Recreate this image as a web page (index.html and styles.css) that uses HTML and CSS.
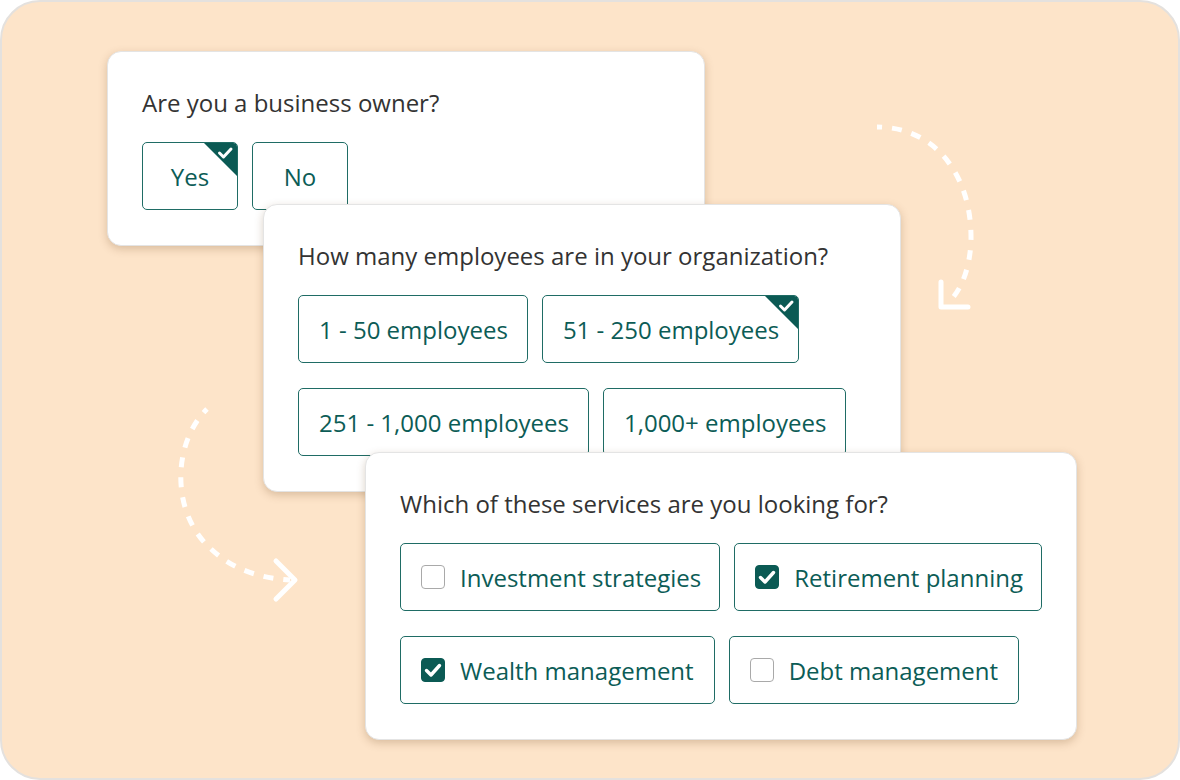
FILE: index.html
```html
<!DOCTYPE html>
<html lang="en">
<head>
<meta charset="utf-8">
<title>Questionnaire</title>
<link rel="stylesheet" href="styles.css">
</head>
<body>
<div class="canvas">
  <svg class="arrows" width="1180" height="780" viewBox="0 0 1180 780" aria-hidden="true">
    <path class="dash" d="M877,127 C935,127 972,175 971,240 C970,268 962,288 950,301"/>
    <path class="head" d="M941,282 L941,307 L968,307"/>
    <path class="dash" d="M207,409 C175,440 170,505 205,543 C230,570 260,578 290,580"/>
    <path class="head" d="M276,561 L295,580 L276,599"/>
  </svg>

  <section class="card card-owner">
    <p class="question">Are you a business owner?</p>
    <div class="row">
      <div class="choice choice-short selected">Yes
        <svg class="corner" width="33" height="33" viewBox="0 0 33 33"><polygon points="0,0 33,0 33,33"/><path d="M15.5,10 L19.5,14 L27,6"/></svg>
      </div>
      <div class="choice choice-short">No</div>
    </div>
  </section>

  <section class="card card-size">
    <p class="question">How many employees are in your organization?</p>
    <div class="rows">
      <div class="row">
        <div class="choice">1 - 50 employees</div>
        <div class="choice selected">51 - 250 employees
          <svg class="corner" width="33" height="33" viewBox="0 0 33 33"><polygon points="0,0 33,0 33,33"/><path d="M15.5,10 L19.5,14 L27,6"/></svg>
        </div>
      </div>
      <div class="row">
        <div class="choice">251 - 1,000 employees</div>
        <div class="choice">1,000+ employees</div>
      </div>
    </div>
  </section>

  <section class="card card-services">
    <p class="question">Which of these services are you looking for?</p>
    <div class="rows">
      <div class="row">
        <div class="choice option"><span class="box"></span>Investment strategies</div>
        <div class="choice option"><span class="box checked"><svg width="24" height="24" viewBox="0 0 24 24"><path d="M5.5,12.5 L10,17 L18.5,7.5"/></svg></span>Retirement planning</div>
      </div>
      <div class="row">
        <div class="choice option"><span class="box checked"><svg width="24" height="24" viewBox="0 0 24 24"><path d="M5.5,12.5 L10,17 L18.5,7.5"/></svg></span>Wealth management</div>
        <div class="choice option"><span class="box"></span>Debt management</div>
      </div>
    </div>
  </section>
</div>
</body>
</html>
```

FILE: styles.css
```css
* { box-sizing: border-box; }

html, body {
  margin: 0;
  padding: 0;
  background: #ffffff;
}

body {
  font-family: "Open Sans", "Noto Sans", sans-serif;
}

.canvas {
  position: relative;
  width: 1180px;
  height: 780px;
  background: #fde4c9;
  border: 2px solid #e4e1de;
  border-radius: 40px;
  overflow: hidden;
}

.arrows {
  position: absolute;
  left: -2px;
  top: -2px;
}

.arrows .dash {
  fill: none;
  stroke: #ffffff;
  stroke-width: 5;
  stroke-dasharray: 10 10;
  stroke-dashoffset: 5;
}

.arrows .head {
  fill: none;
  stroke: #ffffff;
  stroke-width: 5;
  stroke-linecap: round;
  stroke-linejoin: round;
}

.card {
  position: absolute;
  background: #ffffff;
  border: 1px solid #e4e4e4;
  border-radius: 14px;
  padding: 36px 34px 35px;
  box-shadow: 0 3px 9px rgba(110, 70, 30, 0.25);
}

.card-owner { left: 105px; top: 49px; width: 598px; }
.card-size { left: 261px; top: 202px; width: 638px; }
.card-services { left: 363px; top: 450px; width: 712px; }

.question {
  margin: 0 0 24px;
  font-size: 24px;
  line-height: 30px;
  color: #333333;
}

.rows {
  display: flex;
  flex-direction: column;
  gap: 25px;
}

.row {
  display: flex;
  gap: 14px;
}

.choice {
  position: relative;
  display: flex;
  align-items: center;
  justify-content: center;
  height: 68px;
  padding: 0 19px 0 20px;
  border: 1.5px solid #1f6c65;
  border-radius: 5px;
  font-size: 24px;
  color: #0c5c56;
  white-space: nowrap;
  overflow: hidden;
}

.choice-short {
  width: 96px;
  padding: 0;
}

.corner {
  position: absolute;
  top: 0;
  right: 0;
}

.corner polygon { fill: #0b5a54; }
.corner path {
  fill: none;
  stroke: #ffffff;
  stroke-width: 3;
  stroke-linecap: round;
  stroke-linejoin: round;
}

.option {
  justify-content: flex-start;
  gap: 15px;
  padding-right: 20px;
}

.box {
  flex: none;
  width: 24px;
  height: 24px;
  border: 1.5px solid #a9a9a9;
  border-radius: 4px;
  background: #ffffff;
}

.box.checked {
  background: #0b5a54;
  border-color: #0b5a54;
  display: flex;
  align-items: center;
  justify-content: center;
}

.box svg { display: block; flex: none; }
.box path {
  fill: none;
  stroke: #ffffff;
  stroke-width: 3.4;
  stroke-linecap: round;
  stroke-linejoin: round;
}
```
